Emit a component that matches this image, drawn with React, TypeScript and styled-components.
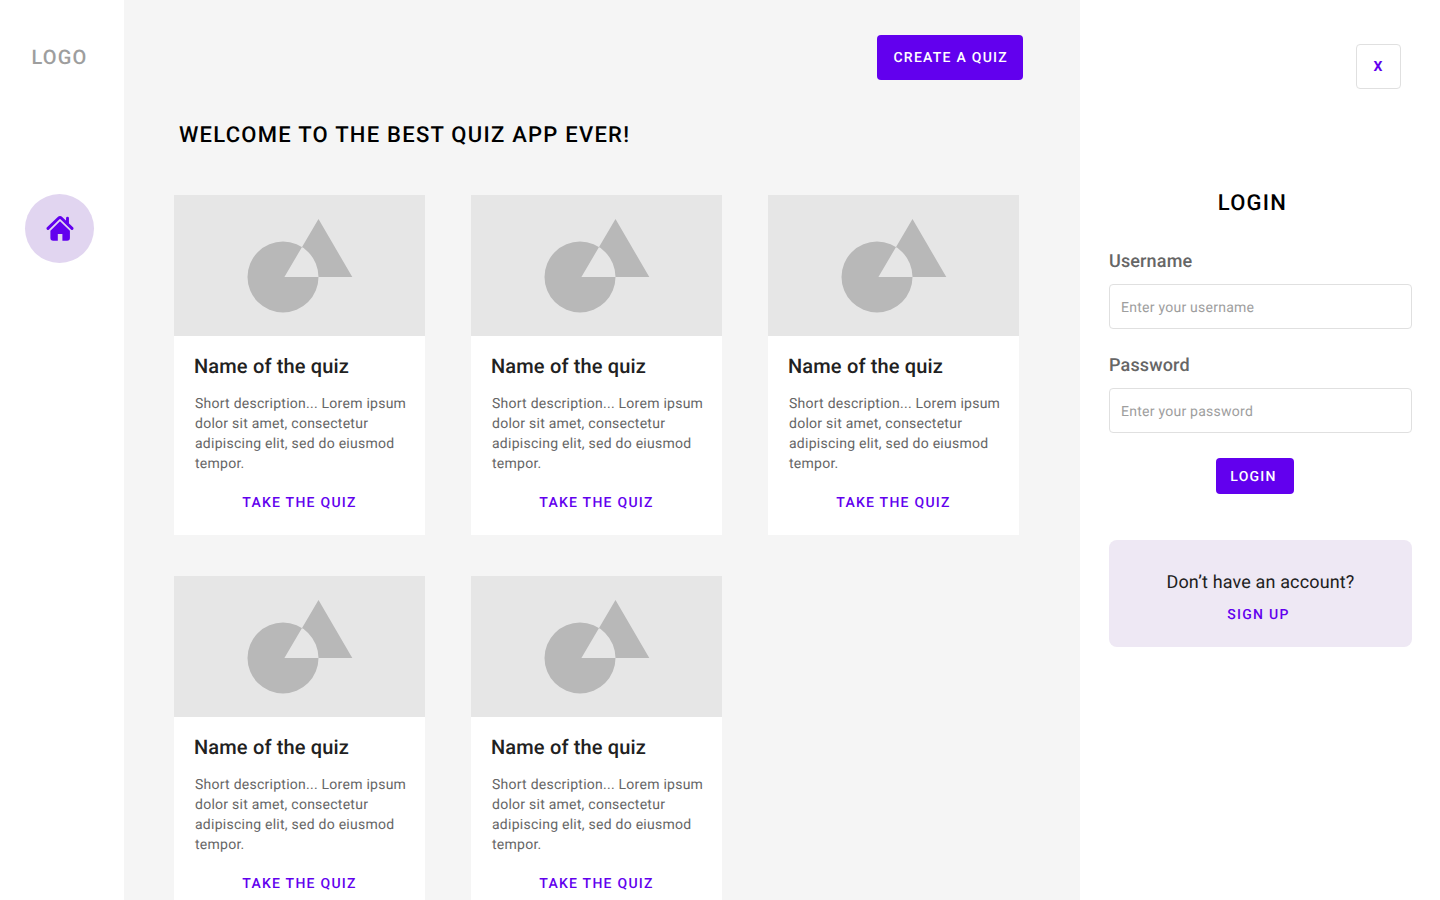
import React from "react";
import styled, { createGlobalStyle, css } from "styled-components";

const colors = {
  primary: "#6200ee",
  primarySoft: "#e1d5f0",
  primaryTint: "#eee8f4",
  surface: "#ffffff",
  canvas: "#f5f5f5",
  border: "#e0e0e0",
  ink: "#212121",
  muted: "#666666",
  faint: "#9e9e9e",
};

const GlobalStyle = createGlobalStyle`
  *, *::before, *::after { box-sizing: border-box; }
  body {
    margin: 0;
    background: ${colors.surface};
    color: ${colors.ink};
    font-family: Roboto, "Liberation Sans", sans-serif;
    text-rendering: geometricPrecision;
  }
  h1, h2, h3, p { margin: 0; }
  button, input { font-family: inherit; text-rendering: inherit; }
`;

const Page = styled.div`
  display: flex;
  align-items: stretch;
  min-height: 100vh;
`;

const Sidebar = styled.nav`
  flex: 0 0 124px;
  display: flex;
  flex-direction: column;
  align-items: center;
  gap: 125px;
  padding: 45px 5px 0 0;
`;

const Logo = styled.span`
  font-size: 20px;
  line-height: 24px;
  font-weight: 500;
  letter-spacing: 0.06em;
  color: ${colors.faint};
`;

const HomeLink = styled.a`
  display: flex;
  align-items: center;
  justify-content: center;
  width: 69px;
  height: 69px;
  padding-bottom: 2px;
  border-radius: 50%;
  background: ${colors.primarySoft};
  color: ${colors.primary};
`;

const Main = styled.main`
  flex: 1;
  min-width: 0;
  padding: 35px 57px 41px 50px;
  background: ${colors.canvas};
`;

const TopBar = styled.header`
  display: flex;
  justify-content: flex-end;
`;

const buttonText = css`
  font-size: 14px;
  line-height: 16px;
  font-weight: 500;
  letter-spacing: 0.09em;
  text-transform: uppercase;
`;

const FilledButton = styled.button<{ $large?: boolean }>`
  ${buttonText}
  height: ${(p) => (p.$large ? 45 : 36)}px;
  padding: ${(p) => (p.$large ? "1px 15px 0 16px" : "2px 17px 0 14px")};
  border: 0;
  border-radius: 4px;
  background: ${colors.primary};
  color: ${colors.surface};
  cursor: pointer;
`;

const TextLink = styled.a`
  ${buttonText}
  color: ${colors.primary};
  text-decoration: none;
`;

const Heading = styled.h1`
  font-size: 22px;
  line-height: 26px;
  font-weight: 500;
  letter-spacing: 0.057em;
  text-transform: uppercase;
  color: #000000;
`;

const Welcome = styled(Heading)`
  margin: 43px 0 46px;
  padding-left: 5px;
`;

const QuizGrid = styled.div`
  display: grid;
  grid-template-columns: repeat(auto-fill, minmax(240px, 1fr));
  gap: 41px 46px;
  margin-right: 4px;
`;

const Card = styled.article`
  display: flex;
  flex-direction: column;
  background: ${colors.surface};
`;

const Cover = styled.div`
  height: 141px;
  display: flex;
  justify-content: center;
  background: #e6e6e6;
`;

const CardBody = styled.div`
  display: flex;
  flex-direction: column;
  padding: 18px 16px 24px 20px;
`;

const CardTitle = styled.h2`
  font-size: 20px;
  line-height: 24px;
  font-weight: 500;
  letter-spacing: 0.008em;
`;

const Description = styled.p`
  margin: 16px 0 21px;
  padding-left: 1px;
  font-size: 14px;
  line-height: 20px;
  letter-spacing: 0.018em;
  color: ${colors.muted};
`;

const CardAction = styled(TextLink)`
  align-self: center;
  margin-right: 4px;
`;

const LoginPanel = styled.aside`
  flex: 0 0 360px;
  display: flex;
  flex-direction: column;
  padding: 44px 28px 0 29px;
`;

const CloseButton = styled.button`
  ${buttonText}
  align-self: flex-end;
  width: 45px;
  height: 45px;
  margin-right: 11px;
  padding: 1px 0 0;
  border: 1px solid ${colors.border};
  border-radius: 4px;
  background: ${colors.surface};
  color: ${colors.primary};
  font-weight: 700;
  cursor: pointer;
`;

const LoginForm = styled.form`
  display: flex;
  flex-direction: column;
  align-items: center;
  padding-top: 102px;
`;

const LoginHeading = styled(Heading)`
  margin: 0 16px 33px 0;
`;

const Field = styled.div`
  display: flex;
  flex-direction: column;
  gap: 10px;
  width: 100%;
  margin-bottom: 25px;
`;

const FieldLabel = styled.label`
  font-size: 18px;
  line-height: 24px;
  font-weight: 500;
  letter-spacing: 0.008em;
  color: ${colors.muted};
`;

const TextInput = styled.input`
  width: 100%;
  height: 45px;
  padding: 2px 11px 0;
  border: 1px solid ${colors.border};
  border-radius: 4px;
  background: ${colors.surface};
  color: ${colors.ink};
  font-size: 14px;
  letter-spacing: 0.018em;
  &::placeholder {
    color: ${colors.faint};
    opacity: 1;
  }
`;

const SubmitRow = styled.div`
  padding-right: 11px;
`;

const SignUpBox = styled.section`
  display: flex;
  flex-direction: column;
  align-items: center;
  gap: 12px;
  margin-top: 46px;
  padding: 31px 0 24px;
  border-radius: 8px;
  background: ${colors.primaryTint};
`;

const SignUpPrompt = styled.p`
  font-size: 18px;
  line-height: 24px;
  letter-spacing: 0.008em;
`;

const SignUpLink = styled(TextLink)`
  margin-right: 4px;
`;

const HomeIcon = () => (
  <svg width="28" height="27" viewBox="0 0 28 27" aria-hidden="true">
    <path
      d="M2 14.4 12.5 4.2Q14 2.8 15.5 4.2L26 14.4M21.5 4.2V9.5"
      fill="none"
      stroke="currentColor"
      strokeWidth="2.9"
      strokeLinecap="round"
      strokeLinejoin="round"
    />
    <path
      d="M14 7.2 23.9 16.8V24Q23.9 26.8 21.1 26.8H16.4V20H11.8V26.8H7.2Q4.4 26.8 4.4 24V16.8Z"
      fill="currentColor"
    />
  </svg>
);

const CoverArt = () => (
  <svg width="251" height="141" viewBox="0 0 251 141" aria-hidden="true">
    <path
      fill="#b8b8b8"
      fillRule="evenodd"
      d="M144.5 82a35.5 35.5 0 1 1-71 0a35.5 35.5 0 1 1 71 0ZM144.5 24 178.3 82H110.4Z"
    />
  </svg>
);

const quizzes = [1, 2, 3, 4, 5].map((id) => ({
  id,
  name: "Name of the quiz",
  description:
    "Short description... Lorem ipsum dolor sit amet, consectetur adipiscing elit, sed do eiusmod tempor.",
}));

export default function App() {
  return (
    <>
      <GlobalStyle />
      <Page>
        <Sidebar>
          <Logo>LOGO</Logo>
          <HomeLink href="#home" aria-label="Home">
            <HomeIcon />
          </HomeLink>
        </Sidebar>
        <Main>
          <TopBar>
            <FilledButton $large type="button">
              Create a quiz
            </FilledButton>
          </TopBar>
          <Welcome>Welcome to the best quiz app ever!</Welcome>
          <QuizGrid>
            {quizzes.map((quiz) => (
              <Card key={quiz.id}>
                <Cover>
                  <CoverArt />
                </Cover>
                <CardBody>
                  <CardTitle>{quiz.name}</CardTitle>
                  <Description>{quiz.description}</Description>
                  <CardAction href={`#quiz-${quiz.id}`}>Take the quiz</CardAction>
                </CardBody>
              </Card>
            ))}
          </QuizGrid>
        </Main>
        <LoginPanel>
          <CloseButton type="button" aria-label="Close">
            X
          </CloseButton>
          <LoginForm onSubmit={(event: React.FormEvent) => event.preventDefault()}>
            <LoginHeading as="h2">Login</LoginHeading>
            <Field>
              <FieldLabel htmlFor="username">Username</FieldLabel>
              <TextInput id="username" type="text" placeholder="Enter your username" />
            </Field>
            <Field>
              <FieldLabel htmlFor="password">Password</FieldLabel>
              <TextInput id="password" type="password" placeholder="Enter your password" />
            </Field>
            <SubmitRow>
              <FilledButton type="submit">Login</FilledButton>
            </SubmitRow>
          </LoginForm>
          <SignUpBox>
            <SignUpPrompt>Don’t have an account?</SignUpPrompt>
            <SignUpLink href="#sign-up">Sign up</SignUpLink>
          </SignUpBox>
        </LoginPanel>
      </Page>
    </>
  );
}
